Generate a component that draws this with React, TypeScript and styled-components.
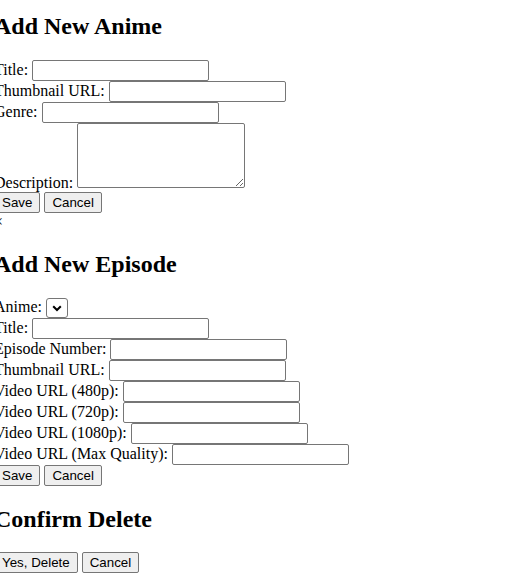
import React from "react";
import styled, { createGlobalStyle } from "styled-components";

const Global = createGlobalStyle`
  html, body { margin: 0; padding: 0; background: #fff; }
  body { font-family: "Liberation Serif", "Times New Roman", serif; font-size: 16px; color: #000; }
`;

const Page = styled.div`
  margin: -7px 0 0 -6px;
`;

const Section = styled.section``;

const Title = styled.h2`
  font-size: 24px;
  font-weight: bold;
  margin: 19.92px 0;
`;

const Row = styled.div``;

const Field = styled.label``;

const TextInput = styled.input`
  box-sizing: border-box;
  width: 177px;
  height: 21px;
  padding: 2px 3px;
  border: 1px solid #767676;
  border-radius: 2px;
  font-family: "Liberation Sans", Arial, sans-serif;
  font-size: 13.333px;
  background: #fff;
  margin: 0;
`;

const TextArea = styled.textarea`
  box-sizing: border-box;
  width: 168px;
  height: 65px;
  padding: 2px;
  border: 1px solid #767676;
  border-radius: 2px;
  font-family: "Liberation Mono", monospace;
  font-size: 13.333px;
  margin: 0;
  vertical-align: baseline;
`;

const SelectWrap = styled.span`
  position: relative;
  display: inline-block;
`;

const Select = styled.select`
  box-sizing: border-box;
  appearance: none;
  width: 22px;
  height: 20px;
  border: 1px solid #767676;
  border-radius: 3px;
  background: #fff;
  margin: 0;
  font-family: "Liberation Sans", Arial, sans-serif;
  font-size: 13.333px;
`;

const Chevron = styled.svg`
  position: absolute;
  left: 6px;
  top: 7px;
  pointer-events: none;
`;

const Actions = styled.div``;

const Button = styled.button`
  box-sizing: border-box;
  height: 21px;
  padding: 1px 7px;
  margin: 0;
  border: 1px solid #767676;
  border-radius: 2px;
  background: #efefef;
  font-family: "Liberation Sans", Arial, sans-serif;
  font-size: 13.333px;
  color: #000;
`;

const Close = styled.div``;

const animeFields = ["Title:", "Thumbnail URL:", "Genre:"];
const episodeFields = [
  "Title:",
  "Episode Number:",
  "Thumbnail URL:",
  "Video URL (480p):",
  "Video URL (720p):",
  "Video URL (1080p):",
  "Video URL (Max Quality):",
];

export default function App() {
  return (
    <Page>
      <Global />
      <Section>
        <Title>Add New Anime</Title>
        <form>
          {animeFields.map((f) => (
            <Row key={f}>
              <Field>
                {f} <TextInput type="text" />
              </Field>
            </Row>
          ))}
          <Row>
            <Field>
              Description: <TextArea />
            </Field>
          </Row>
          <Actions>
            <Button type="button">Save</Button> <Button type="button">Cancel</Button>
          </Actions>
        </form>
        <Close>×</Close>
      </Section>
      <Section>
        <Title>Add New Episode</Title>
        <form>
          <Row>
            <Field>
              Anime:{" "}
              <SelectWrap>
                <Select />
                <Chevron width="10" height="7" viewBox="0 0 10 7">
                  <path d="M1.2 1.2 L5 5 L8.8 1.2" fill="none" stroke="#000" strokeWidth="2" />
                </Chevron>
              </SelectWrap>
            </Field>
          </Row>
          {episodeFields.map((f) => (
            <Row key={f}>
              <Field>
                {f} <TextInput type="text" />
              </Field>
            </Row>
          ))}
          <Actions>
            <Button type="button">Save</Button> <Button type="button">Cancel</Button>
          </Actions>
        </form>
      </Section>
      <Section>
        <Title>Confirm Delete</Title>
        <Actions>
          <Button type="button">Yes, Delete</Button> <Button type="button">Cancel</Button>
        </Actions>
      </Section>
    </Page>
  );
}
